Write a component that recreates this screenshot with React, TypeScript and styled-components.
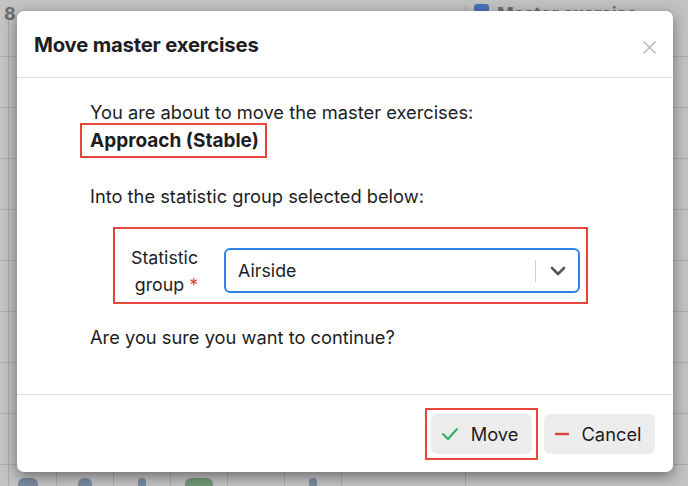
import styled, { createGlobalStyle } from "styled-components";

const GlobalStyle = createGlobalStyle`
  html, body {
    margin: 0;
    padding: 0;
    width: 688px;
    height: 486px;
    overflow: hidden;
    font-family: Inter, "Liberation Sans", sans-serif;
    color: #1d1d1f;
  }
`;

const Page = styled.div`
  position: relative;
  width: 688px;
  height: 486px;
  background: #f3f3f3;
  overflow: hidden;
`;

// faint table of the page behind the dialog
const BackTable = styled.div`
  display: grid;
  grid-template-columns: 4px 462px 1fr;
  grid-auto-rows: 51px;
  margin-top: 6px;
`;

const BackCell = styled.div<{ $edge?: boolean }>`
  border-bottom: 1px solid #d6d6d6;
  border-right: ${(p) => (p.$edge ? "1px solid #d6d6d6" : "none")};
  display: flex;
  align-items: flex-start;
  gap: 8px;
  padding: 0 0 0 8px;
  font-size: 18px;
  font-weight: 700;
  color: #888;
`;

const BackText = styled.span`
  margin-top: -3px;
`;

const BackCheck = styled.span`
  width: 15px;
  height: 15px;
  border-radius: 3px;
  background: #5b8fe6;
  margin-top: -2px;
`;

const BackFooter = styled.div`
  position: absolute;
  left: 0;
  right: 0;
  bottom: 0;
  height: 30px;
  display: grid;
  grid-template-columns: repeat(6, 57px) 1fr;
`;

const BackFooterCell = styled.div`
  border-right: 1px solid #d6d6d6;
  display: flex;
  justify-content: center;
  align-items: flex-end;
`;

const BackBlob = styled.span<{ $color: string; $w: number }>`
  width: ${(p) => p.$w}px;
  height: 8px;
  border-radius: 6px 6px 0 0;
  background: ${(p) => p.$color};
  opacity: 0.7;
`;

const Overlay = styled.div`
  position: absolute;
  inset: 0;
  background: rgba(0, 0, 0, 0.2);
`;

const Modal = styled.div`
  position: absolute;
  left: 17px;
  top: 11px;
  width: 656px;
  height: 461px;
  box-sizing: border-box;
  background: #fff;
  border-radius: 7px;
  box-shadow: 0 4px 14px rgba(0, 0, 0, 0.45);
  display: flex;
  flex-direction: column;
`;

const Header = styled.div`
  height: 67px;
  box-sizing: border-box;
  border-bottom: 1px solid #dcdcdc;
  display: flex;
  align-items: center;
  justify-content: space-between;
  padding: 1px 14px 0 17px;
`;

const Title = styled.h4`
  margin: 0;
  font-size: 20.3px;
  font-weight: 700;
  letter-spacing: -0.2px;
  color: #1d1d1f;
`;

const Close = styled.span`
  font-size: 30px;
  font-weight: 200;
  color: #b5b5b5;
  line-height: 1;
`;

const Body = styled.div`
  flex: 1;
  border-bottom: 1px solid #dcdcdc;
  padding: 23px 0 0 73px;
  font-size: 18.3px;
  font-weight: 400;
  color: #1d1d1f;
`;

const Line = styled.p<{ $top?: number }>`
  margin: ${(p) => p.$top ?? 0}px 0 0;
  line-height: 22px;
`;

const Marked = styled.div`
  display: inline-flex;
  align-items: center;
  border: 2px solid #e6473a;
  margin-left: -10px;
  padding: 0 6px 0 8px;
  height: 35px;
  box-sizing: border-box;
`;

const Strong = styled.span`
  font-weight: 700;
  font-size: 19px;
`;

const FormBox = styled.div`
  display: flex;
  align-items: center;
  gap: 26px;
  width: 475px;
  height: 77px;
  box-sizing: border-box;
  border: 2px solid #e6473a;
  margin: 20px 0 0 23px;
  padding: 10px 6px 0 16px;
`;

const Label = styled.label`
  text-align: right;
  line-height: 27px;
  font-size: 17.8px;
  color: #1d1d1f;
`;

const Req = styled.span`
  color: #d9453a;
  margin-left: 5px;
`;

const Select = styled.div`
  flex: 1;
  height: 45px;
  box-sizing: border-box;
  border: 2px solid #2f80ed;
  border-radius: 6px;
  display: flex;
  align-items: center;
  padding: 0 12px 0 12px;
  font-size: 17.8px;
`;

const Value = styled.span`
  flex: 1;
`;

const Sep = styled.span`
  width: 1px;
  height: 22px;
  background: #cfcfcf;
  margin-right: 14px;
`;

const Footer = styled.div`
  height: 77px;
  display: flex;
  align-items: center;
  justify-content: flex-end;
  gap: 6px;
  padding: 0 18px 0 0;
`;

const Outline = styled.div`
  border: 2px solid #e6473a;
  padding: 4px 4px;
  display: flex;
`;

const Button = styled.button<{ $w: number }>`
  width: ${(p) => p.$w}px;
  height: 40px;
  border: none;
  border-radius: 6px;
  background: #ececec;
  display: flex;
  align-items: center;
  justify-content: center;
  gap: 12px;
  font-family: Inter, "Liberation Sans", sans-serif;
  font-size: 18.3px;
  color: #1d1d1f;
  padding: 0 4px 0 0;
`;

export default function App() {
  const rows = Array.from({ length: 10 });
  return (
    <Page>
      <GlobalStyle />
      <BackTable>
        {rows.map((_, i) => (
          <>
            <BackCell key={`a${i}`} $edge />
            <BackCell key={`b${i}`} $edge style={{ paddingLeft: 0 }}>
              {i === 0 ? <BackText>8</BackText> : null}
            </BackCell>
            <BackCell key={`c${i}`}>
              {i === 0 ? (
                <>
                  <BackCheck />
                  <BackText>Master exercise</BackText>
                </>
              ) : null}
            </BackCell>
          </>
        ))}
      </BackTable>
      <BackFooter>
        <BackFooterCell>
          <BackBlob $color="#6f8fb5" $w={20} />
        </BackFooterCell>
        <BackFooterCell>
          <BackBlob $color="#6f8fb5" $w={14} />
        </BackFooterCell>
        <BackFooterCell>
          <BackBlob $color="#6f8fb5" $w={8} />
        </BackFooterCell>
        <BackFooterCell>
          <BackBlob $color="#5fa86a" $w={28} />
        </BackFooterCell>
        <BackFooterCell />
        <BackFooterCell>
          <BackBlob $color="#6f8fb5" $w={8} />
        </BackFooterCell>
        <div />
      </BackFooter>
      <Overlay />
      <Modal>
        <Header>
          <Title>Move master exercises</Title>
          <Close>×</Close>
        </Header>
        <Body>
          <Line>You are about to move the master exercises:</Line>
          <Marked>
            <Strong>Approach (Stable)</Strong>
          </Marked>
          <Line $top={27}>Into the statistic group selected below:</Line>
          <FormBox>
            <Label>
              Statistic
              <br />
              group<Req>*</Req>
            </Label>
            <Select>
              <Value>Airside</Value>
              <Sep />
              <svg width="16" height="10" viewBox="0 0 16 10">
                <polyline
                  points="2,2 8,8 14,2"
                  fill="none"
                  stroke="#555"
                  strokeWidth="2.6"
                  strokeLinecap="round"
                  strokeLinejoin="round"
                />
              </svg>
            </Select>
          </FormBox>
          <Line $top={22}>Are you sure you want to continue?</Line>
        </Body>
        <Footer>
          <Outline>
            <Button $w={101}>
              <svg width="18" height="14" viewBox="0 0 18 14">
                <polyline
                  points="2,7 7,12 16,2"
                  fill="none"
                  stroke="#2fae5b"
                  strokeWidth="2"
                  strokeLinecap="round"
                  strokeLinejoin="round"
                />
              </svg>
              Move
            </Button>
          </Outline>
          <Button $w={111}>
            <svg width="16" height="4" viewBox="0 0 16 4">
              <line x1="1" y1="2" x2="15" y2="2" stroke="#d9453a" strokeWidth="2.4" />
            </svg>
            Cancel
          </Button>
        </Footer>
      </Modal>
    </Page>
  );
}
